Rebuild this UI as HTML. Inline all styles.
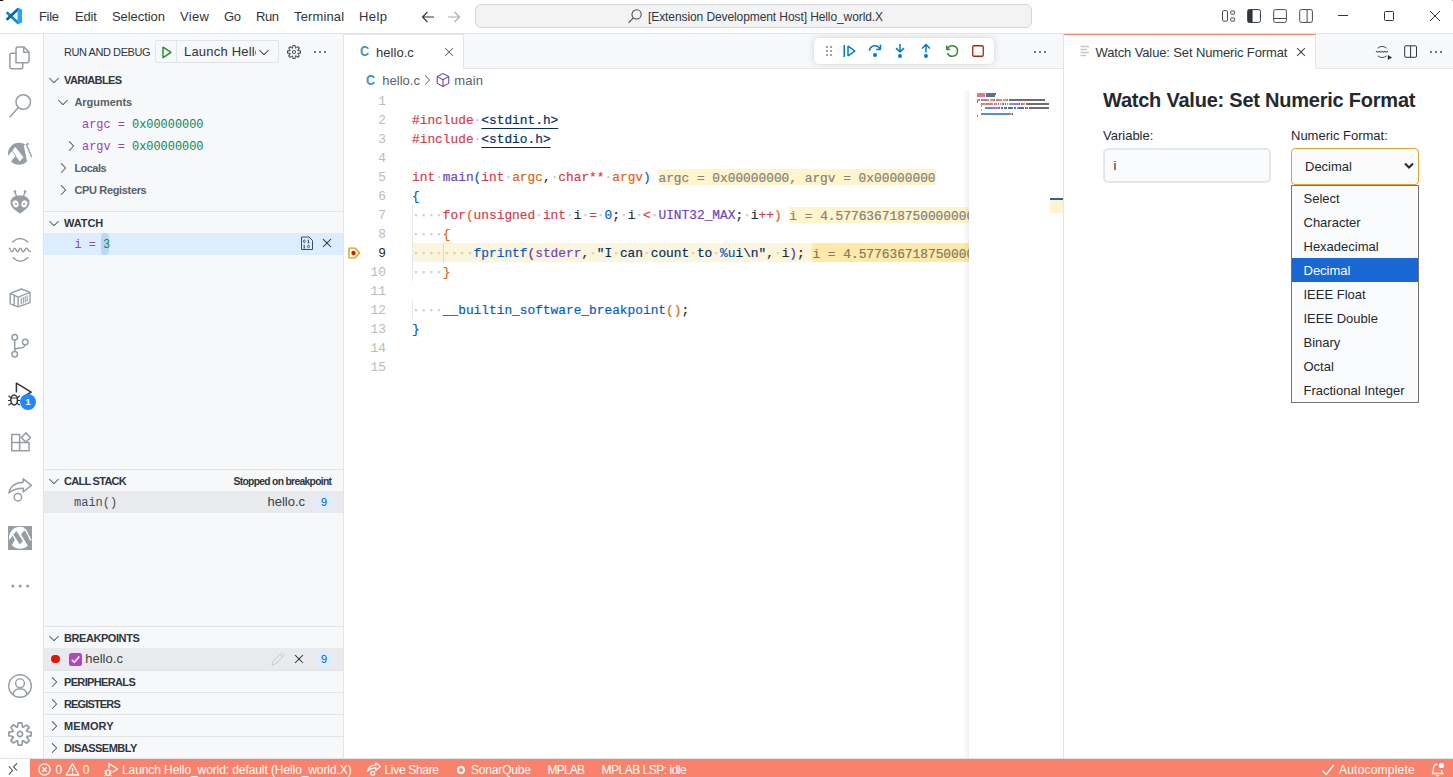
<!DOCTYPE html>
<html><head>
<meta charset="utf-8">
<title>Hello_world.X</title>
<style>
*{box-sizing:border-box;margin:0;padding:0}
html,body{width:1453px;height:777px;overflow:hidden;background:#fff}
body{font-family:"Liberation Sans",sans-serif;font-size:13px;color:#444d56;position:relative}
.abs{position:absolute}
.t{position:absolute;white-space:nowrap;line-height:1}
svg{display:block;position:absolute;overflow:visible}
.mono{font-family:"Liberation Mono",monospace}
#titlebar{left:0;top:0;width:1453px;height:34px;background:#fff;border-bottom:1px solid #e1e4e8}
#activity{left:0;top:34px;width:44px;height:724px;background:#fff;border-right:1px solid #e1e4e8}
#sidebar{left:44px;top:34px;width:300px;height:724px;background:#f6f8fa;border-right:1px solid #e1e4e8;overflow:hidden}
#ed1{left:344px;top:34px;width:720px;height:724px;background:#fff;border-right:1px solid #e1e4e8;overflow:hidden}
#ed2{left:1064px;top:34px;width:389px;height:724px;background:#fff;overflow:hidden}
#status{left:0;top:758px;width:1453px;height:22px;background:#f9826c;border-top:1px solid #e1e4e8;color:#fff;font-size:12px}
.tabbar{left:0;top:0;width:100%;height:35px;background:#f6f8fa;border-bottom:1px solid #e1e4e8}
.menu{top:10px;color:#2f363d;font-size:13px}
/* sidebar */
.ph{position:absolute;left:0;width:299px;height:22px;border-top:1px solid #e1e4e8;line-height:22px;font-size:11px;font-weight:bold;color:#2f363d;white-space:nowrap}
.ph span{position:absolute;left:20px;top:0}
.row{position:absolute;left:0;width:299px;height:22px;line-height:22px;white-space:nowrap}
.row .l{position:absolute;top:0}
.scope{font-size:11px;font-weight:bold;color:#586069}
.vn{color:#9b46b0}.vv{color:#098658}
.smono{font-family:"Liberation Mono",monospace;font-size:11.92px}
.badge{position:absolute;width:18px;height:18px;border-radius:9px;background:#dbedff;color:#005cc5;font-size:11px;text-align:center;line-height:18px}
/* code */
.ln{position:absolute;left:0;width:42px;text-align:right;font-family:"Liberation Mono",monospace;font-size:12.83px;line-height:19px;height:19px;padding-top:1px;color:#babbbd}
.cl{position:absolute;left:68px;font-family:"Liberation Mono",monospace;font-size:12.83px;line-height:19px;height:19px;padding-top:1px;white-space:pre;color:#24292e;-webkit-text-stroke:.18px currentColor}
.k{color:#d73a49}.s{color:#032f62}.f{color:#6f42c1}.v{color:#e36209}.c{color:#005cc5}
.b1{color:#005cc5}.b2{color:#e36209}.b3{color:#5a32a3}
.w{color:#c8ccd1;-webkit-text-stroke:.35px currentColor}
#mm i{position:absolute;height:1.600px;display:block}
.iv{background:#fff4cc;color:#808080;padding-top:1.5px}
.u{text-decoration:underline;text-underline-offset:4px;text-decoration-thickness:1px}
/* webview */
.opt{position:absolute;left:0;width:126px;height:24px;line-height:24px;padding-top:1px;padding-left:11.500px;font-size:13px;color:#24292e;white-space:nowrap}
</style>
</head>
<body>
<!-- ============ TITLE BAR ============ -->
<div id="titlebar" class="abs">
  <svg style="left:6px;top:8px" width="16" height="16" viewBox="0 0 100 100"><path d="M9 31L76 93" stroke="#1384d4" stroke-width="17" stroke-linecap="round"></path><path d="M9 69L76 7" stroke="#0069b8" stroke-width="17" stroke-linecap="round"></path><path d="M72 0L100 10V90L72 100Z" fill="#27a6f0"></path></svg>
  <span class="t menu" style="left: 39px; letter-spacing: -0.32px;">File</span>
  <span class="t menu" style="left: 75px; letter-spacing: -0.14px;">Edit</span>
  <span class="t menu" style="left: 112px; letter-spacing: -0.06px;">Selection</span>
  <span class="t menu" style="left: 180px; letter-spacing: 0.35px;">View</span>
  <span class="t menu" style="left: 224px; letter-spacing: -0.34px;">Go</span>
  <span class="t menu" style="left: 256px; letter-spacing: -0.43px;">Run</span>
  <span class="t menu" style="left: 294px; letter-spacing: 0.13px;">Terminal</span>
  <span class="t menu" style="left: 359px; letter-spacing: 0.42px;">Help</span>
  <!-- nav arrows -->
  <svg style="left:420px;top:9px" width="16" height="16" viewBox="0 0 16 16"><path d="M14 8H2.5M7.5 3L2.5 8l5 5" fill="none" stroke="#2f363d" stroke-width="1.1"></path></svg>
  <svg style="left:446px;top:9px" width="16" height="16" viewBox="0 0 16 16"><path d="M2 8h11.5M8.5 3l5 5-5 5" fill="none" stroke="#a8adb3" stroke-width="1.1"></path></svg>
  <!-- command center -->
  <div class="abs" style="left:475px;top:4px;width:557px;height:24px;border:1px solid #d4d7db;border-radius:6px;background:#f3f3f4"></div>
  <svg style="left:627px;top:8px" width="16" height="16" viewBox="0 0 16 16"><circle cx="9.6" cy="6.4" r="4.6" fill="none" stroke="#444d56" stroke-width="1.1"></circle><path d="M6.4 9.8L1.6 14.8" stroke="#444d56" stroke-width="1.1"></path></svg>
  <span class="t" style="left: 648px; top: 11px; font-size: 12px; color: rgb(47, 54, 61); letter-spacing: -0.09px;">[Extension Development Host] Hello_world.X</span>
  <!-- layout controls -->
  <svg style="left:1221px;top:8px" width="16" height="16" viewBox="0 0 16 16" fill="none" stroke="#444d56"><rect x="1.500" y="2.600" width="5" height="10.600" rx="1.200"></rect><rect x="9.700" y="2.900" width="3.900" height="3.300" rx=".6"></rect><rect x="9.700" y="9.900" width="3.900" height="3.300" rx=".6"></rect></svg>
  <svg style="left:1246px;top:8px" width="16" height="16" viewBox="0 0 16 16"><rect x="1.700" y="1.600" width="12.700" height="12.800" rx="1.700" fill="none" stroke="#2f363d"></rect><path d="M2.900 1.600H6.600V14.400H2.900Q1.700 14.400 1.700 13.200V2.800Q1.700 1.600 2.900 1.600Z" fill="#2f363d"></path></svg>
  <svg style="left:1272px;top:8px" width="16" height="16" viewBox="0 0 16 16" fill="none" stroke="#444d56"><rect x="1.700" y="1.600" width="12.700" height="12.800" rx="1.700"></rect><path d="M1.700 10.500h12.700"></path></svg>
  <svg style="left:1298px;top:8px" width="16" height="16" viewBox="0 0 16 16" fill="none" stroke="#444d56"><rect x="1.700" y="1.600" width="12.700" height="12.800" rx="1.700"></rect><path d="M9.100 1.600v12.800"></path></svg>
  <!-- window controls -->
  <div class="abs" style="left:1338px;top:15px;width:10px;height:1px;background:#2f363d"></div>
  <div class="abs" style="left:1384px;top:11px;width:10px;height:10px;border:1px solid #2f363d;border-radius:1.5px"></div>
  <svg style="left:1430px;top:11px" width="10" height="10" viewBox="0 0 10 10"><path d="M0 0L10 10M10 0L0 10" stroke="#2f363d" stroke-width="1"></path></svg>
  <div class="abs" style="left:-1px;top:-1px;width:4.500px;height:2.200px;background:#111;border-radius:0 0 3px 0"></div>
  <div class="abs" style="left:1451.500px;top:-.5px;width:2px;height:1.500px;background:#8a8a8a;border-radius:0 0 0 2px"></div>
</div>
<!-- ============ ACTIVITY BAR ============ -->
<div id="activity" class="abs">
  <!-- files -->
  <svg style="left:8px;top:11px" width="24" height="25" viewBox="0 0 24 25" fill="none" stroke="#959da5" stroke-width="1.5" stroke-linejoin="round"><path d="M8 17.750H19a2 2 0 0 0 2-2V7L16 2H10a2 2 0 0 0-2 2Z"></path><path d="M15.700 2.200v5.100h5"></path><path d="M8 8.150H3.850a2 2 0 0 0-2 2v11.600a2 2 0 0 0 2 2h8.900a2 2 0 0 0 2-2v-4"></path></svg>
  <!-- search -->
  <svg style="left:8px;top:59px" width="24" height="25" viewBox="0 0 24 25" fill="none" stroke="#959da5" stroke-width="1.5"><circle cx="15.250" cy="9" r="7.250"></circle><path d="M10.300 14.500L1.700 24.200"></path></svg>
  <!-- microchip -->
  <svg style="left:8px;top:108px" width="26" height="24" viewBox="0 0 26 24"><circle cx="11" cy="11.800" r="11" fill="#959da5"></circle><path d="M7.300 5L15.500 15.200L11.800 19.450L7.600 14.100L1 21.800L-2.400 17.100Z" fill="#fff"></path><path d="M4.200 9.200L8 14.200" stroke="#959da5" stroke-width=".9"></path><path d="M15.900 3.600L18.200 2.500L25 15.500L22.600 19.500L19 19.500Z" fill="#fff"></path><path d="M18.200 2.300L23.800 15.200" stroke="#959da5" stroke-width="1.300"></path><circle cx="19.750" cy="1.900" r="1.100" fill="#959da5"></circle></svg>
  <!-- platformio -->
  <svg style="left:8px;top:156px" width="24" height="24" viewBox="0 0 24 24"><path d="M12 23.500C9 21.500 2.500 18 2.500 12.500C2.500 8 6.500 5.600 12 5.600S21.500 8 21.500 12.500C21.500 18 15 21.500 12 23.500Z" fill="#959da5"></path><path d="M8.500 6.500L7 1.800M15.500 6.500L17 1.800" stroke="#959da5" stroke-width="1.300"></path><circle cx="6.900" cy="1.600" r="1.400" fill="#959da5"></circle><circle cx="17.100" cy="1.600" r="1.400" fill="#959da5"></circle><ellipse cx="7.600" cy="13.800" rx="2.900" ry="3.600" fill="#fff" transform="rotate(-20 7.600 13.800)"></ellipse><ellipse cx="16.400" cy="13.800" rx="2.900" ry="3.600" fill="#fff" transform="rotate(20 16.400 13.800)"></ellipse><circle cx="8" cy="14" r="1.100" fill="#959da5"></circle><circle cx="16" cy="14" r="1.100" fill="#959da5"></circle></svg>
  <!-- wave -->
  <svg style="left:8px;top:203px" width="24" height="26" viewBox="0 0 24 26" fill="none" stroke="#959da5" stroke-width="1.400" stroke-linecap="round"><path d="M4.500 4.900Q12.200 -1.900 19.800 4.900"></path><path d="M5 20.800Q12.200 27.600 19.800 20.800"></path><path d="M1.300 11.300C2.700 11.300 2.500 14.900 3.900 14.900S5.300 11.300 6.700 11.300 8.200 14.900 9.600 14.900 11 11.300 12.400 11.300 13.800 14.900 15.200 14.900 17 11.300 18.600 11.300 20.500 14.900 22.400 14.500"></path></svg>
  <!-- container -->
  <svg style="left:8px;top:252px" width="24" height="24" viewBox="0 0 24 24" fill="none" stroke="#959da5" stroke-width="1.400" stroke-linejoin="round"><path d="M2.200 7.400L13.500 3l8.500 3.300v10.300L10.100 20.800 2.200 17.800Z"></path><path d="M2.200 7.400L10.100 11.200 22 6.300M10.100 11.200v9.600M6.200 9.400v10"></path><path d="M13.300 11.800v6.400M15.300 11v6.400M17.200 10.200v6.400M19.200 9.400v6.400" stroke-width="1.100"></path></svg>
  <!-- git -->
  <svg style="left:8px;top:292px" width="24" height="32" viewBox="0 0 24 32" fill="none" stroke="#959da5" stroke-width="1.500"><circle cx="6.700" cy="11.300" r="2.800"></circle><circle cx="6.700" cy="28.300" r="2.800"></circle><circle cx="17.200" cy="16.100" r="2.800"></circle><path d="M6.700 14.100v11.400M6.700 24.500c.6-2.200 2-2.400 5-2.400 2.800 0 4.700-.800 5.200-3.200"></path></svg>
  <!-- debug (active) -->
  <svg style="left:6px;top:347px" width="28" height="28" viewBox="0 0 28 28" fill="none" stroke="#2f363d" stroke-width="1.500" stroke-linejoin="round"><path d="M10.400 11.500V2.200L25.200 11.100 17 16"></path><ellipse cx="8.150" cy="19" rx="3.300" ry="4.900"></ellipse><path d="M5 17h6.300M2.500 14.800l2.500 2M13.800 14.800l-2.500 2M2 19.500h2.800M11.500 19.500h2.800M2.500 24.200l2.700-2M13.800 24.200l-2.700-2" stroke-width="1.200"></path></svg>
  <div class="abs" style="left:20px;top:360px;width:16px;height:16px;border-radius:8px;background:#2188ff;color:#fff;font-size:9px;font-weight:bold;text-align:center;line-height:16px">1</div>
  <!-- extensions -->
  <svg style="left:8px;top:396px" width="24" height="24" viewBox="0 0 24 24" fill="none" stroke="#959da5" stroke-width="1.500" stroke-linejoin="round"><path d="M3.750 4.450h7.900v16.400H3.750ZM3.750 12.600H21v8.250H11.650"></path><path d="M17.900 2.900l4.600 4.600-4.600 4.600-4.600-4.600Z"></path></svg>
  <!-- live share -->
  <svg style="left:8px;top:443px" width="25" height="25" viewBox="0 0 25 25" fill="none" stroke="#959da5" stroke-width="1.500" stroke-linejoin="round"><path d="M.900 16C2 9.500 8 5.300 15.200 5.300V1.800L23.300 8.300 15.200 15V11.300C9.500 11.300 5 12.300 .900 16Z"></path><circle cx="9.900" cy="20.200" r="3.700"></circle></svg>
  <!-- mplab -->
  <svg style="left:8px;top:492px" width="24" height="24" viewBox="0 0 24 24"><rect x="0" y="0" width="24" height="24" fill="#959da5"></rect><circle cx="12.100" cy="11.800" r="11.050" fill="#fff"></circle><path d="M15.800 5L12.950 8.400L19.750 19.450L24 24V0H17L16.300 2.500L17.100 5Z" fill="#959da5"></path><path d="M16.900 2.700L22.900 14.400" stroke="#fff" stroke-width="1.400"></path><path d="M8.400 5L5.300 8.400L11.800 18.600L14.900 14.900Z" fill="#959da5"></path><path d="M0 14.350H1.060L4.740 9.540L6.840 14.350L3.610 19.160L0 24Z" fill="#959da5"></path></svg>
  <!-- ellipsis -->
  <svg style="left:8px;top:540px" width="24" height="24" viewBox="0 0 24 24" fill="#959da5"><circle cx="4.800" cy="12" r="1.500"></circle><circle cx="12.200" cy="12" r="1.500"></circle><circle cx="19.600" cy="12" r="1.500"></circle></svg>
  <!-- account -->
  <svg style="left:8px;top:640px" width="24" height="24" viewBox="0 0 24 24" fill="none" stroke="#959da5" stroke-width="1.400"><circle cx="12" cy="12" r="11.300"></circle><circle cx="12" cy="9.300" r="4.400"></circle><path d="M4.700 20.500c1.200-4 4-5.700 7.300-5.700s6.100 1.700 7.300 5.700"></path></svg>
  <!-- gear -->
  <svg style="left:8px;top:688px" width="24" height="24" viewBox="0 0 24 24"><path transform="translate(-1.710 -1.710) scale(1.714)" fill="#959da5" fill-rule="evenodd" clip-rule="evenodd" d="M9.100 4.400L8.600 2H7.400l-.5 2.400-.7.300-2-1.300-.9.800 1.300 2-.2.700-2.400.5v1.200l2.400.5.300.800-1.300 2 .800.800 2-1.300.800.300.4 2.300h1.200l.5-2.400.800-.300 2 1.300.800-.800-1.300-2 .300-.800 2.300-.4V7.400l-2.400-.5-.300-.800 1.300-2-.800-.800-2 1.300-.7-.2zM9.400 1l.5 2.400L12 2.100l2 2-1.400 2.100 2.400.4v2.800l-2.400.5L14 12l-2 2-2.100-1.400-.5 2.400H6.600l-.5-2.400L4 13.900l-2-2 1.400-2.100L1 9.400V6.600l2.400-.5L2.100 4l2-2 2.100 1.400.4-2.400h2.800zm.6 7c0 1.100-.9 2-2 2s-2-.9-2-2 .9-2 2-2 2 .9 2 2zM8 9c.6 0 1-.4 1-1s-.4-1-1-1-1 .4-1 1 .4 1 1 1z"></path></svg>
</div>
<!-- ============ SIDEBAR ============ -->
<div id="sidebar" class="abs">
  <span class="t" style="left: 20px; top: 12.7px; font-size: 11px; color: rgb(47, 54, 61); letter-spacing: -0.43px;">RUN AND DEBUG</span>
  <div class="abs" style="left:111px;top:6px;width:124px;height:23px;border:1px solid #e1e4e8;border-radius:2px"></div>
  <div class="abs" style="left:132px;top:7px;width:1px;height:21px;background:#e1e4e8"></div>
  <svg style="left:114px;top:9.500px" width="16" height="16" viewBox="0 0 16 16"><path d="M4.250 3l1.166-.624 8 5.333v1.248l-8 5.334-1.166-.624V3zm1.500 1.401v7.864l5.898-3.932L5.750 4.401z" fill="#2c8a36"></path></svg>
  <div class="abs" style="left:140px;top:7px;width:71.500px;height:21px;overflow:hidden"><span class="t" style="left: 0px; top: 4px; font-size: 13px; color: rgb(47, 54, 61); letter-spacing: 0.2px;">Launch Hello_</span></div>
  <svg style="left:212px;top:9.800px" width="16" height="16" viewBox="0 0 16 16"><path d="M7.976 10.072l4.357-4.357.62.618L8.284 11h-.618L3 6.333l.619-.618 4.357 4.357z" fill="#2f363d"></path></svg>
  <svg style="left:242px;top:10px" width="16" height="16" viewBox="0 0 16 16"><path fill="#444d56" fill-rule="evenodd" clip-rule="evenodd" d="M9.100 4.400L8.600 2H7.400l-.5 2.400-.7.300-2-1.300-.9.800 1.300 2-.2.700-2.400.5v1.200l2.400.5.300.800-1.300 2 .800.800 2-1.300.800.300.4 2.300h1.200l.5-2.400.800-.300 2 1.300.800-.800-1.300-2 .300-.800 2.300-.4V7.400l-2.400-.5-.300-.800 1.300-2-.800-.800-2 1.300-.7-.2zM9.400 1l.5 2.400L12 2.100l2 2-1.400 2.100 2.400.4v2.800l-2.400.5L14 12l-2 2-2.100-1.400-.5 2.400H6.600l-.5-2.400L4 13.900l-2-2 1.400-2.100L1 9.400V6.600l2.400-.5L2.100 4l2-2 2.100 1.400.4-2.400h2.800zm.6 7c0 1.100-.9 2-2 2s-2-.9-2-2 .9-2 2-2 2 .9 2 2zM8 9c.6 0 1-.4 1-1s-.4-1-1-1-1 .4-1 1 .4 1 1 1z"></path></svg>
  <svg style="left:268px;top:10px" width="16" height="16" viewBox="0 0 16 16"><path d="M4 8a1 1 0 1 1-2 0 1 1 0 0 1 2 0zm5 0a1 1 0 1 1-2 0 1 1 0 0 1 2 0zm5 0a1 1 0 1 1-2 0 1 1 0 0 1 2 0z" fill="#444d56"></path></svg>

  <!-- VARIABLES -->
  <div class="ph" style="top:34px;border-top:1px solid transparent"><svg style="left:2px;top:3px" width="16" height="16" viewBox="0 0 16 16"><path d="M7.976 10.072l4.357-4.357.62.618L8.284 11h-.618L3 6.333l.619-.618 4.357 4.357z" fill="#444d56"></path></svg><span style="letter-spacing: -0.57px;">VARIABLES</span></div>
  <div class="row" style="top:57px"><svg style="left:10.500px;top:3px" width="16" height="16" viewBox="0 0 16 16"><path d="M7.976 10.072l4.357-4.357.62.618L8.284 11h-.618L3 6.333l.619-.618 4.357 4.357z" fill="#444d56"></path></svg><span class="l scope" style="left: 30.4px; letter-spacing: -0.03px;">Arguments</span></div>
  <div class="row" style="top:79px"><span class="l smono" style="left:38px;top:1px"><span class="vn">argc =</span> <span class="vv">0x00000000</span></span></div>
  <div class="row" style="top:101px"><svg style="left:18.500px;top:3px" width="16" height="16" viewBox="0 0 16 16"><path d="M10.072 8.024L5.715 3.667l.618-.62L11 7.716v.618L6.333 13l-.618-.619 4.357-4.357z" fill="#444d56"></path></svg><span class="l smono" style="left:38px;top:1px"><span class="vn">argv =</span> <span class="vv">0x00000000</span></span></div>
  <div class="row" style="top:123px"><svg style="left:10.500px;top:3px" width="16" height="16" viewBox="0 0 16 16"><path d="M10.072 8.024L5.715 3.667l.618-.62L11 7.716v.618L6.333 13l-.618-.619 4.357-4.357z" fill="#444d56"></path></svg><span class="l scope" style="left: 30.4px; letter-spacing: -0.53px;">Locals</span></div>
  <div class="row" style="top:145px"><svg style="left:10.500px;top:3px" width="16" height="16" viewBox="0 0 16 16"><path d="M10.072 8.024L5.715 3.667l.618-.62L11 7.716v.618L6.333 13l-.618-.619 4.357-4.357z" fill="#444d56"></path></svg><span class="l scope" style="left: 30.4px; letter-spacing: -0.34px;">CPU Registers</span></div>

  <!-- WATCH -->
  <div class="ph" style="top:177px"><svg style="left:2px;top:3px" width="16" height="16" viewBox="0 0 16 16"><path d="M7.976 10.072l4.357-4.357.62.618L8.284 11h-.618L3 6.333l.619-.618 4.357 4.357z" fill="#444d56"></path></svg><span style="letter-spacing: -0.08px;">WATCH</span></div>
  <div class="row" style="top:199px;background:#dbedff">
    <div class="abs" style="left:57.200px;top:0;width:7.800px;height:22px;background:#b9d8f8;border-radius:4px"></div>
    <span class="l smono" style="left:30.400px;top:1px"><span class="vn">i =</span> <span class="vv">3</span></span>
    <svg style="left:255px;top:1.500px" width="16" height="17" viewBox="0 0 16 17" fill="none" stroke="#444d56" stroke-width="1"><path d="M2.500 2H10L13.500 5.500V14.500H2.500Z" stroke-linejoin="round"></path><g stroke-width=".9"><ellipse cx="5.300" cy="6.300" rx=".9" ry="1.300"></ellipse><path d="M8.600 5.400L9.500 4.900V7.700M8.500 7.750h2.100"></path><path d="M4.400 10.600L5.300 10.100V12.900M4.300 12.950h2.100"></path><ellipse cx="9.500" cy="11.500" rx=".9" ry="1.300"></ellipse></g></svg>
    <svg style="left:274.800px;top:2px" width="16" height="16" viewBox="0 0 16 16"><path d="M8 8.707l3.646 3.647.708-.707L8.707 8l3.647-3.646-.707-.708L8 7.293 4.354 3.646l-.707.708L7.293 8l-3.646 3.646.707.708L8 8.707z" fill="#2f363d"></path></svg>
  </div>

  <!-- CALL STACK -->
  <div class="ph" style="top:435px"><svg style="left:2px;top:3px" width="16" height="16" viewBox="0 0 16 16"><path d="M7.976 10.072l4.357-4.357.62.618L8.284 11h-.618L3 6.333l.619-.618 4.357 4.357z" fill="#444d56"></path></svg><span style="letter-spacing: -0.72px;">CALL STACK</span><span style="left: 189.5px; top: 1px; font-size: 10.3px; color: rgb(47, 54, 61); letter-spacing: -0.68px;">Stopped on breakpoint</span></div>
  <div class="row" style="top:457px;background:#e8eaed">
    <span class="l mono" style="left:30px;top:1px;font-size:12px;color:#444d56">main()</span>
    <span class="l" style="left: 223.5px; font-size: 13px; color: rgb(58, 65, 73); letter-spacing: -0.01px;">hello.c</span>
    <div class="badge" style="left:271px;top:2px">9</div>
  </div>

  <!-- BREAKPOINTS -->
  <div class="ph" style="top:592px"><svg style="left:2px;top:3px" width="16" height="16" viewBox="0 0 16 16"><path d="M7.976 10.072l4.357-4.357.62.618L8.284 11h-.618L3 6.333l.619-.618 4.357 4.357z" fill="#444d56"></path></svg><span style="letter-spacing: -0.43px;">BREAKPOINTS</span></div>
  <div class="row" style="top:614px;background:#e8eaed">
    <div class="abs" style="left:7px;top:6.600px;width:8.600px;height:8.600px;border-radius:5px;background:#e51400"></div>
    <div class="abs" style="left:25px;top:5px;width:13px;height:13px;border-radius:2.500px;background:#b046c2"></div>
    <svg style="left:25px;top:5px" width="13" height="13" viewBox="0 0 13 13"><path d="M2.800 6.800l2.500 2.600 5-6" fill="none" stroke="#fff" stroke-width="1.600"></path></svg>
    <span class="l" style="left: 41.2px; font-size: 13px; color: rgb(58, 65, 73); letter-spacing: 0.02px;">hello.c</span>
    <svg style="left:226px;top:3px" width="16" height="16" viewBox="0 0 16 16" fill="none" stroke="#c6cacf" stroke-width="1"><path d="M2 14l.8-3.500L11.500 2 14 4.500 5.500 13Z M9.800 3.700l2.500 2.500"></path></svg>
    <svg style="left:246.500px;top:3px" width="16" height="16" viewBox="0 0 16 16"><path d="M8 8.707l3.646 3.647.708-.707L8.707 8l3.647-3.646-.707-.708L8 7.293 4.354 3.646l-.707.708L7.293 8l-3.646 3.646.707.708L8 8.707z" fill="#2f363d"></path></svg>
    <div class="badge" style="left:271px;top:2px">9</div>
  </div>
  <div class="ph" style="top:636px"><svg style="left:2px;top:3px" width="16" height="16" viewBox="0 0 16 16"><path d="M10.072 8.024L5.715 3.667l.618-.62L11 7.716v.618L6.333 13l-.618-.619 4.357-4.357z" fill="#444d56"></path></svg><span style="letter-spacing: -0.65px;">PERIPHERALS</span></div>
  <div class="ph" style="top:658px"><svg style="left:2px;top:3px" width="16" height="16" viewBox="0 0 16 16"><path d="M10.072 8.024L5.715 3.667l.618-.62L11 7.716v.618L6.333 13l-.618-.619 4.357-4.357z" fill="#444d56"></path></svg><span style="letter-spacing: -0.85px;">REGISTERS</span></div>
  <div class="ph" style="top:680px"><svg style="left:2px;top:3px" width="16" height="16" viewBox="0 0 16 16"><path d="M10.072 8.024L5.715 3.667l.618-.62L11 7.716v.618L6.333 13l-.618-.619 4.357-4.357z" fill="#444d56"></path></svg><span style="letter-spacing: 0.1px;">MEMORY</span></div>
  <div class="ph" style="top:702px"><svg style="left:2px;top:3px" width="16" height="16" viewBox="0 0 16 16"><path d="M10.072 8.024L5.715 3.667l.618-.62L11 7.716v.618L6.333 13l-.618-.619 4.357-4.357z" fill="#444d56"></path></svg><span style="letter-spacing: -0.52px;">DISASSEMBLY</span></div>
</div>
<!-- ============ EDITOR GROUP 1 ============ -->
<div id="ed1" class="abs">
  <div class="abs tabbar"></div>
  <div class="abs" style="left:0;top:0;width:120px;height:35px;background:#fff;border-top:1px solid #e1e4e8;border-right:1px solid #e1e4e8"></div>
  <span class="t" style="left:15.700px;top:10.200px;font-size:14px;font-weight:bold;color:#4f94b4;transform:scaleX(.9);transform-origin:0 0">C</span>
  <span class="t" style="left: 32px; top: 12px; font-size: 13px; color: rgb(47, 54, 61); letter-spacing: 0.04px;">hello.c</span>
  <svg style="left:97px;top:10px" width="16" height="16" viewBox="0 0 16 16"><path d="M8 8.707l3.646 3.647.708-.707L8.707 8l3.647-3.646-.707-.708L8 7.293 4.354 3.646l-.707.708L7.293 8l-3.646 3.646.707.708L8 8.707z" fill="#6a737d"></path></svg>
  <!-- debug toolbar -->
  <div class="abs" style="left:470px;top:4px;width:179.500px;height:26px;background:#fff;border-radius:5px;box-shadow:0 0 6px rgba(0,0,0,.16)"></div>
  <svg style="left:477px;top:9px" width="16" height="16" viewBox="0 0 16 16"><path d="M5 3h2v2H5V3zm0 4h2v2H5V7zm0 4h2v2H5v-2zm4-8h2v2H9V3zm0 4h2v2H9V7zm0 4h2v2H9v-2z" fill="#9aa0a6"></path></svg>
  <svg style="left:497px;top:9px" width="16" height="16" viewBox="0 0 16 16"><path d="M2.500 2H4v12H2.500V2zm4.936.390L6.250 3v10l1.186.610 7-5V7.390l-7-5zM12.710 8l-4.960 3.543V4.457L12.710 8z" fill="#007acc"></path></svg>
  <svg style="left:523px;top:9px" width="16" height="16" viewBox="0 0 16 16"><path d="M14.250 5.750v-4h-1.500v2.542c-1.145-1.359-2.911-2.209-4.840-2.209-3.177 0-5.920 2.307-6.160 5.398l-.020.269h1.501l.022-.226c.212-2.195 2.202-3.940 4.656-3.940 1.736 0 3.244.875 4.050 2.166h-2.830v1.500h4.163l.962-.975V5.750h-.004zM8 14a2 2 0 1 0 0-4 2 2 0 0 0 0 4z" fill="#007acc"></path></svg>
  <svg style="left:548px;top:9px" width="16" height="16" viewBox="0 0 16 16"><path d="M8 9.532h.542l3.905-3.905-1.061-1.060-2.637 2.610V1H7.251v6.177l-2.637-2.610-1.061 1.060 3.905 3.905H8zm1.956 3.481a2 2 0 1 1-4 0 2 2 0 0 1 4 0z" fill="#007acc"></path></svg>
  <svg style="left:574px;top:9px" width="16" height="16" viewBox="0 0 16 16"><path d="M8 1h-.542L3.553 4.905l1.061 1.060 2.637-2.610v6.177h1.498V3.355l2.637 2.610 1.061-1.060L8.542 1H8zm1.956 12.013a2 2 0 1 1-4 0 2 2 0 0 1 4 0z" fill="#007acc"></path></svg>
  <svg style="left:600px;top:9px" width="16" height="16" viewBox="0 0 16 16"><path d="M12.750 8a4.500 4.500 0 0 1-8.610 1.834l-1.391.565A6.001 6.001 0 0 0 14.250 8 6 6 0 0 0 3.500 4.334V2.500H2v4l.750.750h3.500v-1.500H4.352A4.500 4.500 0 0 1 12.750 8z" fill="#388a34"></path></svg>
  <svg style="left:626px;top:9px" width="16" height="16" viewBox="0 0 16 16"><rect x="2.750" y="2.750" width="10.500" height="10.500" rx="1.300" fill="none" stroke="#a1260d" stroke-width="1.300"></rect></svg>
  <svg style="left:688px;top:10px" width="16" height="16" viewBox="0 0 16 16"><path d="M4 8a1 1 0 1 1-2 0 1 1 0 0 1 2 0zm5 0a1 1 0 1 1-2 0 1 1 0 0 1 2 0zm5 0a1 1 0 1 1-2 0 1 1 0 0 1 2 0z" fill="#444d56"></path></svg>

  <!-- breadcrumbs -->
  <span class="t" style="left:21.700px;top:38.800px;font-size:14px;font-weight:bold;color:#4f94b4;transform:scaleX(.9);transform-origin:0 0">C</span>
  <span class="t" style="left: 38.3px; top: 39.7px; font-size: 13px; color: rgb(88, 96, 105);">hello.c</span>
  <svg style="left:75px;top:38px" width="16" height="16" viewBox="0 0 16 16"><path d="M10.072 8.024L5.715 3.667l.618-.62L11 7.716v.618L6.333 13l-.618-.619 4.357-4.357z" fill="#6a737d"></path></svg>
  <svg style="left:91px;top:38px" width="16" height="16" viewBox="0 0 16 16" fill="none" stroke="#652d90" stroke-width="1" stroke-linejoin="round"><path d="M8 1.500l5.800 3v6.800L8 14.500l-5.800-3.200V4.500Z M2.200 4.500L8 7.700l5.800-3.200M8 7.700v6.800"></path></svg>
  <span class="t" style="left: 110.3px; top: 39.7px; font-size: 13px; color: rgb(88, 96, 105); letter-spacing: 0.17px;">main</span>

  <!-- editor -->
  <div class="abs" id="code" style="left:0;top:57px;width:720px;height:667px">
    <!-- current line highlight -->
    <div class="abs" style="left:68px;top:152px;width:557px;height:19px;background:#fbf5dd"></div>
    <div class="abs" style="left:468.400px;top:152px;width:157px;height:19px;background:#fde9a8"></div>
    <!-- indent guides -->
    <div class="abs" style="left:68px;top:114px;width:1px;height:76px;background:#e6e9ed"></div>
    <div class="abs" style="left:68px;top:209px;width:1px;height:19px;background:#e6e9ed"></div>
    <div class="abs" style="left:99px;top:152px;width:1px;height:19px;background:#d7dbe0"></div>
    <!-- breakpoint glyph -->
    <svg style="left:3px;top:153.500px" width="16" height="16" viewBox="0 0 16 16"><path d="M2 3.200h6.200L12.700 8l-4.500 4.800H2Z" fill="#fffdf2" stroke="#d9a300" stroke-width="1.300" stroke-linejoin="round"></path><circle cx="6.500" cy="8" r="2.200" fill="#e51400"></circle></svg>

    <div class="ln" style="top:0">1</div>
    <div class="ln" style="top:19px">2</div>
    <div class="ln" style="top:38px">3</div>
    <div class="ln" style="top:57px">4</div>
    <div class="ln" style="top:76px">5</div>
    <div class="ln" style="top:95px">6</div>
    <div class="ln" style="top:114px">7</div>
    <div class="ln" style="top:133px">8</div>
    <div class="ln" style="top:152px;color:#24292e">9</div>
    <div class="ln" style="top:171px">10</div>
    <div class="ln" style="top:190px">11</div>
    <div class="ln" style="top:209px">12</div>
    <div class="ln" style="top:228px">13</div>
    <div class="ln" style="top:247px">14</div>
    <div class="ln" style="top:266px">15</div>

    <div class="cl" style="top:19px"><span class="k">#include</span><span class="w">·</span><span class="s u">&lt;stdint.h&gt;</span></div>
    <div class="cl" style="top:38px"><span class="k">#include</span><span class="w">·</span><span class="s u">&lt;stdio.h&gt;</span></div>
    <div class="cl" style="top:76px"><span class="k">int</span><span class="w">·</span><span class="f">main</span><span class="b1">(</span><span class="k">int</span><span class="w">·</span><span class="v">argc</span>,<span class="w">·</span><span class="k">char**</span><span class="w">·</span><span class="v">argv</span><span class="b1">)</span> <span class="iv">argc = 0x00000000, argv = 0x00000000</span></div>
    <div class="cl" style="top:95px"><span class="b1">{</span></div>
    <div class="cl" style="top:114px"><span class="w">····</span><span class="k">for</span><span class="b2">(</span><span class="k">unsigned</span><span class="w">·</span><span class="k">int</span><span class="w">·</span>i<span class="w">·</span><span class="k">=</span><span class="w">·</span><span class="c">0</span>;<span class="w">·</span>i<span class="w">·</span><span class="k">&lt;</span><span class="w">·</span><span class="f">UINT32_MAX</span>;<span class="w">·</span>i<span class="k">++</span><span class="b2">)</span> <span class="iv">i = 4.5776367187500000000000000000000000</span></div>
    <div class="cl" style="top:133px"><span class="w">····</span><span class="b2">{</span></div>
    <div class="cl" style="top:152px"><span class="w" style="color:#d3cfba">········</span><span class="c">fprintf</span><span class="b3">(</span><span class="f">stderr</span>,<span class="w" style="color:#d3cfba">·</span><span class="s">"I</span><span class="w" style="color:#d3cfba">·</span><span class="s">can</span><span class="w" style="color:#d3cfba">·</span><span class="s">count</span><span class="w" style="color:#d3cfba">·</span><span class="s">to</span><span class="w" style="color:#d3cfba">·</span><span class="c">%u</span><span class="s">i</span><span class="s">\n"</span>,<span class="w" style="color:#d3cfba">·</span>i<span class="b3">)</span>; <span class="iv" style="background:none;color:#7f7a68">i = 4.5776367187500000000000000000000000</span></div>
    <div class="cl" style="top:171px"><span class="w">····</span><span class="b2">}</span></div>
    <div class="cl" style="top:209px"><span class="w">····</span><span class="c">__builtin_software_breakpoint</span><span class="b2">()</span>;</div>
    <div class="cl" style="top:228px"><span class="b1">}</span></div>

    <!-- minimap -->
    <div class="abs" style="left:619px;top:0;width:6px;height:667px;background:linear-gradient(90deg,rgba(0,0,0,0),rgba(0,0,0,.06))"></div>
    <div class="abs" id="mm" style="left:625px;top:0;width:81px;height:667px;background:#fff;overflow:hidden"><i style="left:8px;top:2px;width:8px;background:#d73a49;opacity:.68"></i><i style="left:17px;top:2px;width:10px;background:#032f62;opacity:.68"></i><i style="left:8px;top:4px;width:8px;background:#d73a49;opacity:.68"></i><i style="left:17px;top:4px;width:9px;background:#032f62;opacity:.68"></i><i style="left:8px;top:8px;width:3px;background:#d73a49;opacity:.68"></i><i style="left:12px;top:8px;width:4px;background:#6f42c1;opacity:.68"></i><i style="left:16px;top:8px;width:1px;background:#005cc5;opacity:.68"></i><i style="left:17px;top:8px;width:3px;background:#d73a49;opacity:.68"></i><i style="left:21px;top:8px;width:4px;background:#e36209;opacity:.68"></i><i style="left:25px;top:8px;width:1px;background:#24292e;opacity:.68"></i><i style="left:27px;top:8px;width:6px;background:#d73a49;opacity:.68"></i><i style="left:34px;top:8px;width:4px;background:#e36209;opacity:.68"></i><i style="left:38px;top:8px;width:1px;background:#005cc5;opacity:.68"></i><i style="left:40px;top:8px;width:36px;background:#4a4a4a;opacity:.8"></i><i style="left:8px;top:10px;width:1px;background:#005cc5;opacity:.68"></i><i style="left:12px;top:12px;width:3px;background:#d73a49;opacity:.68"></i><i style="left:15px;top:12px;width:1px;background:#e36209;opacity:.68"></i><i style="left:16px;top:12px;width:8px;background:#d73a49;opacity:.68"></i><i style="left:25px;top:12px;width:3px;background:#d73a49;opacity:.68"></i><i style="left:29px;top:12px;width:1px;background:#24292e;opacity:.68"></i><i style="left:31px;top:12px;width:1px;background:#d73a49;opacity:.68"></i><i style="left:33px;top:12px;width:1px;background:#005cc5;opacity:.68"></i><i style="left:34px;top:12px;width:1px;background:#24292e;opacity:.68"></i><i style="left:36px;top:12px;width:1px;background:#24292e;opacity:.68"></i><i style="left:38px;top:12px;width:1px;background:#d73a49;opacity:.68"></i><i style="left:40px;top:12px;width:10px;background:#6f42c1;opacity:.68"></i><i style="left:50px;top:12px;width:1px;background:#24292e;opacity:.68"></i><i style="left:52px;top:12px;width:1px;background:#24292e;opacity:.68"></i><i style="left:53px;top:12px;width:2px;background:#d73a49;opacity:.68"></i><i style="left:55px;top:12px;width:1px;background:#e36209;opacity:.68"></i><i style="left:57px;top:12px;width:23px;background:#4a4a4a;opacity:.8"></i><i style="left:12px;top:14px;width:1px;background:#e36209;opacity:.68"></i><i style="left:16px;top:16px;width:7px;background:#005cc5;opacity:.68"></i><i style="left:23px;top:16px;width:1px;background:#6f42c1;opacity:.68"></i><i style="left:24px;top:16px;width:6px;background:#6f42c1;opacity:.68"></i><i style="left:30px;top:16px;width:1px;background:#24292e;opacity:.68"></i><i style="left:32px;top:16px;width:2px;background:#032f62;opacity:.68"></i><i style="left:35px;top:16px;width:3px;background:#032f62;opacity:.68"></i><i style="left:39px;top:16px;width:5px;background:#032f62;opacity:.68"></i><i style="left:45px;top:16px;width:2px;background:#032f62;opacity:.68"></i><i style="left:48px;top:16px;width:2px;background:#005cc5;opacity:.68"></i><i style="left:50px;top:16px;width:4px;background:#032f62;opacity:.68"></i><i style="left:54px;top:16px;width:1px;background:#24292e;opacity:.68"></i><i style="left:56px;top:16px;width:1px;background:#24292e;opacity:.68"></i><i style="left:57px;top:16px;width:1px;background:#6f42c1;opacity:.68"></i><i style="left:58px;top:16px;width:1px;background:#24292e;opacity:.68"></i><i style="left:60px;top:16px;width:20px;background:#4a4a4a;opacity:.8"></i><i style="left:12px;top:18px;width:1px;background:#e36209;opacity:.68"></i><i style="left:12px;top:22px;width:29px;background:#005cc5;opacity:.68"></i><i style="left:41px;top:22px;width:2px;background:#e36209;opacity:.68"></i><i style="left:43px;top:22px;width:1px;background:#24292e;opacity:.68"></i><i style="left:8px;top:24px;width:1px;background:#005cc5;opacity:.68"></i></div>
    <div class="abs" style="left:706px;top:0;width:13px;height:667px;background:#fff"></div>
    <!-- overview ruler -->
    <div class="abs" style="left:706px;top:107px;width:13px;height:2px;background:#2f5f9e"></div>
    <div class="abs" style="left:706px;top:109px;width:13px;height:13px;background:#fdf3d3"></div>
  </div>
</div>
<!-- ============ EDITOR GROUP 2 (webview) ============ -->
<div id="ed2" class="abs">
  <div class="abs tabbar"></div>
  <div class="abs" style="left:0;top:0;width:252px;height:35px;background:#fff;border-top:1px solid #f9826c;border-right:1px solid #e1e4e8"></div>
  <svg style="left:16px;top:11px" width="10" height="12" viewBox="0 0 10 12"><path d="M.5 1.500h8.500M.5 4.500h6.500M.5 7.500h8.500M.5 10.500h5.500" stroke="#c3c6ca" stroke-width="1.400"></path></svg>
  <span class="t" style="left: 31.5px; top: 12.4px; font-size: 13px; color: rgb(47, 54, 61); letter-spacing: -0.13px;">Watch Value: Set Numeric Format</span>
  <svg style="left:229px;top:10px" width="16" height="16" viewBox="0 0 16 16"><path d="M8 8.707l3.646 3.647.708-.707L8.707 8l3.647-3.646-.707-.708L8 7.293 4.354 3.646l-.707.708L7.293 8l-3.646 3.646.707.708L8 8.707z" fill="#2f363d"></path></svg>
  <!-- actions -->
  <svg style="left:312px;top:10px" width="17" height="17" viewBox="0 0 17 17" fill="none" stroke="#444d56" stroke-width="1" stroke-linecap="round"><path d="M2 3.900Q6 .700 10.200 3.900"></path><path d="M2 12.100Q6 15.300 10.200 12.100"></path><path d="M.3 7.300c.7 0 .7 1 1.400 1s.7-1 1.400-1 .7 1 1.400 1 .7-1 1.400-1 .7 1 1.400 1 .7-1 1.400-1 .7 1 1.400 1 .7-1 1.400-1" stroke-width="1.100"></path><path d="M11.800 10.900l4.300 2.500-4.300 2.600Z" fill="#2f363d" stroke="none"></path></svg>
  <svg style="left:338px;top:10px" width="16" height="16" viewBox="0 0 16 16" fill="none" stroke="#2f363d" stroke-width="1"><rect x="2.700" y="1.800" width="11.800" height="11.500" rx="1.200"></rect><path d="M8.600 1.800v11.500"></path></svg>
  <svg style="left:364px;top:10px" width="16" height="16" viewBox="0 0 16 16"><path d="M4 8a1 1 0 1 1-2 0 1 1 0 0 1 2 0zm5 0a1 1 0 1 1-2 0 1 1 0 0 1 2 0zm5 0a1 1 0 1 1-2 0 1 1 0 0 1 2 0z" fill="#444d56"></path></svg>

  <!-- webview content -->
  <span class="t" style="left: 39px; top: 56px; font-size: 20px; font-weight: bold; color: rgb(36, 41, 46); letter-spacing: -0.23px;">Watch Value: Set Numeric Format</span>
  <span class="t" style="left:39px;top:94.800px;font-size:13px;color:#24292e">Variable:</span>
  <span class="t" style="left:227px;top:94.800px;font-size:13px;color:#24292e">Numeric Format:</span>
  <div class="abs" style="left:39px;top:114px;width:168px;height:35px;border:2px solid #e3e6ea;border-radius:5px;background:#fafbfc"></div>
  <span class="t" style="left:49.500px;top:125px;font-size:13px;color:#24292e">i</span>
  <div class="abs" style="left:227px;top:114px;width:128px;height:37px;border:1.500px solid #e2a336;border-radius:4px;background:#fbfbfc"></div>
  <span class="t" style="left:241px;top:126px;font-size:13px;color:#24292e">Decimal</span>
  <svg style="left:340px;top:128px" width="10" height="8" viewBox="0 0 10 8"><path d="M1 1.500l4 4 4-4" fill="none" stroke="#24292e" stroke-width="2"></path></svg>
  <!-- dropdown list -->
  <div class="abs" style="left:227px;top:151px;width:128px;height:218px;border:1px solid #767676;background:#fafbfc">
    <div class="opt" style="top:0">Select</div>
    <div class="opt" style="top:24px">Character</div>
    <div class="opt" style="top:48px">Hexadecimal</div>
    <div class="opt" style="top:72px;background:#1967d2;color:#fff">Decimal</div>
    <div class="opt" style="top:96px">IEEE Float</div>
    <div class="opt" style="top:120px">IEEE Double</div>
    <div class="opt" style="top:144px">Binary</div>
    <div class="opt" style="top:168px">Octal</div>
    <div class="opt" style="top:192px">Fractional Integer</div>
  </div>
</div>

<!-- ============ STATUS BAR ============ -->
<div id="status" class="abs">
  <div class="abs" style="left:0;top:0;width:30px;height:22px;background:#fff"></div>
  <svg style="left:6px;top:3px" width="16" height="16" viewBox="0 0 16 16" fill="none" stroke="#586069" stroke-width="1.100"><path d="M2.900 4.300L6.500 8.400 2.900 12.600"></path><path d="M11.100 1.200L7.500 5l3.600 3.600"></path></svg>
  <svg style="left:37px;top:3px" width="15" height="15" viewBox="0 0 15 15" fill="none" stroke="#fff" stroke-width="1.300"><circle cx="7.500" cy="7.500" r="5.600"></circle><path d="M5.300 5.300l4.400 4.400M9.700 5.300l-4.400 4.400"></path></svg>
  <span class="t" style="left:55.500px;top:5px">0</span>
  <svg style="left:65px;top:2.500px" width="15" height="15" viewBox="0 0 15 15" fill="none" stroke="#fff" stroke-width="1.300" stroke-linejoin="round"><path d="M7.500 1.800L13.800 13H1.200Z"></path><path d="M7.500 6v3.800M7.500 10.800v1.200"></path></svg>
  <span class="t" style="left:82.800px;top:5px">0</span>
  <svg style="left:103px;top:2.300px" width="16" height="16" viewBox="0 0 16 16" fill="none" stroke="#fff" stroke-width="1.300" stroke-linejoin="round"><path d="M6 7.500V2.500l8.500 5.500-5 3.300"></path><ellipse cx="5" cy="11.800" rx="2.100" ry="2.700"></ellipse><path d="M1.200 9.500l1.900 1.200M8.800 9.500l-1.900 1.200M1 12.300h1.900M9 12.300H7.100M1.200 15l1.900-1.300M8.800 15l-1.900-1.300" stroke-width=".9"></path></svg>
  <span class="t" style="left: 122px; top: 5px; letter-spacing: -0.09px;">Launch Hello_world: default (Hello_world.X)</span>
  <svg style="left:366px;top:3px" width="15" height="15" viewBox="0 0 15 15" fill="none" stroke="#fff" stroke-width="1.300" stroke-linejoin="round"><path d="M1.400 9.400C2.200 5.600 5.500 3.200 9.800 3.200V.8L14.400 4.400 9.800 8.200V5.800C6.500 5.800 4 6.600 1.400 9.400Z"></path><circle cx="6.800" cy="11.300" r="1.900" fill="#f9826c"></circle></svg>
  <span class="t" style="left: 384.5px; top: 5px; letter-spacing: -0.32px;">Live Share</span>
  <div class="abs" style="left:457px;top:6.800px;width:8px;height:8px;border:2px solid #fff;border-radius:5px"></div>
  <span class="t" style="left: 471px; top: 5px; letter-spacing: -0.17px;">SonarQube</span>
  <span class="t" style="left: 547.5px; top: 5px; letter-spacing: -0.77px;">MPLAB</span>
  <span class="t" style="left: 601.5px; top: 5px; letter-spacing: -0.49px;">MPLAB LSP: idle</span>
  <svg style="left:1321px;top:4px" width="14" height="14" viewBox="0 0 14 14"><path d="M1.500 7.500l3.700 4L12.800 2" fill="none" stroke="#fff" stroke-width="1.400"></path></svg>
  <span class="t" style="left: 1339px; top: 5px; letter-spacing: 0.21px;">Autocomplete</span>
  <svg style="left:1430px;top:3px" width="15" height="15" viewBox="0 0 15 15" fill="none" stroke="#fff" stroke-width="1.300" stroke-linejoin="round"><path d="M2 11.500c1.300-1 1.500-2.500 1.500-5C3.500 4 5 2.200 7.500 2.200M11.500 8c0 1.500.5 2.700 1.500 3.500H2"></path><path d="M6 13.200c.4.800 2.600.8 3 0"></path><circle cx="11.300" cy="3.500" r="2.600" fill="#fff" stroke="none"></circle></svg>
</div>


</body></html>
